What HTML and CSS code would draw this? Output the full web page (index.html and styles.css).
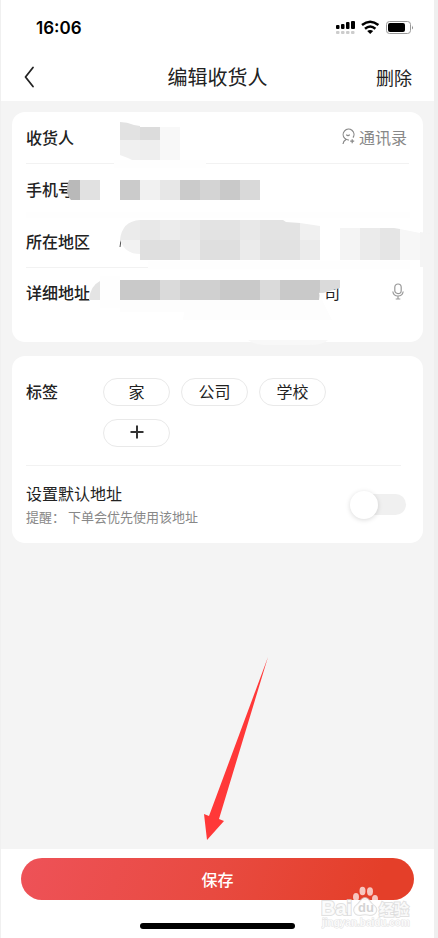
FILE: index.html
```html
<!DOCTYPE html>
<html lang="zh-CN">
<head>
<meta charset="utf-8">
<meta name="viewport" content="width=device-width, initial-scale=1">
<title>编辑收货人</title>
<link rel="stylesheet" href="styles.css">
</head>
<body>
<form class="screen">
  <div class="status">
    <span class="time">16:06</span>
    <svg class="status-icons" width="80" height="16" viewBox="0 0 80 16" aria-hidden="true">
      <g fill="#000"><rect x="2" y="5" width="3.500" height="4" rx="1"/><rect x="7" y="4" width="3.500" height="5" rx="1"/><rect x="12" y="2" width="3.500" height="7" rx="1"/><rect x="17" y="1" width="4" height="8" rx="1"/></g>
      <g fill="#ccc"><rect x="2" y="11" width="3.500" height="3" rx="1"/><rect x="7" y="11" width="3.500" height="3" rx="1"/><rect x="12" y="11" width="3.500" height="3" rx="1"/><rect x="17" y="11" width="3.500" height="3" rx="1"/></g>
      <g fill="none" stroke="#000" stroke-width="2.500"><path d="M28 5q8.200-6.600 16.400 0"/><path d="M31 8.700q5.200-4.400 10.400 0"/></g>
      <path d="M33.200 10.900q3-2 6 0L36.200 14z"/>
      <rect x="52.500" y="1.500" width="24" height="12" rx="3" fill="none" stroke="#999"/>
      <rect x="54" y="3" width="17" height="9" rx="2"/>
      <path d="M78 5.500q1.800 2 0 4z" fill="#888"/>
    </svg>
  </div>
  <header class="nav">
    <button type="button" class="back" aria-label="返回"><svg width="12" height="24" viewBox="0 0 12 24"><path d="M10 2.500 2.500 12l7.500 9.500" fill="none" stroke="#222" stroke-width="1.800" stroke-linecap="round" stroke-linejoin="round"/></svg></button>
    <h1>编辑收货人</h1>
    <button type="button" class="delete">删除</button>
  </header>
  <main>
    <section class="card contact">
      <div class="row">
        <label for="name">收货人</label>
        <input id="name" type="text">
        <button type="button" class="book">
          <svg width="14" height="17" viewBox="0 0 14 17" fill="none" stroke="#888" stroke-width="1.200"><path d="M3.600 10.200A5.400 5.400 0 1 1 12 9.600M3.600 10.200Q5.500 12.200 8 12M4.800 11.600Q2.400 12.800 2 16M5.300 6.700q1.700 2 3.400 0M11.200 11.200v4M9.200 13.200h4"/></svg>
          通讯录
        </button>
      </div>
      <div class="row">
        <label for="phone">手机号</label>
        <input id="phone" type="tel">
      </div>
      <div class="row">
        <label for="region">所在地区</label>
        <input id="region" type="text">
      </div>
      <div class="row address">
        <label for="address">详细地址</label>
        <input id="address" type="text" value="司">
        <button type="button" class="mic" aria-label="语音输入"><svg width="12" height="18" viewBox="0 0 12 18" fill="none" stroke="#999" stroke-width="1.200"><rect x="2.800" y="1" width="6.400" height="9.600" rx="3.200"/><path d="M.8 8.500Q1.500 13 6 13t5.200-4.500M6 13v3M3.700 16h4.600"/></svg></button>
      </div>
      <svg class="redaction" viewBox="12 112 411 230" aria-hidden="true">
        <path fill="#fefefe" d="M114 160h92v8h-92zM26 212h384v6H26zM148 261h262v8H148zM100 276h20v32h-20z"/>
        <path fill="#e2e2e2" d="M120 122q7 0 14 3l6 1v14h-20z"/><path fill="#dcdcdc" d="M140 127h20v13h-20z"/><path fill="#f8f8f8" d="M160 127h20v33h-20z"/>
        <path fill="#f0f0f0" d="M120 140h20v20h-8l-4-2-8-3z"/><path fill="#eee" d="M140 140h20v20h-20z"/>
        <path fill="#b9b9b9" d="M69 180h11v20H71q-4-4-4-10 0-6 2-10z"/><path fill="#e1e1e1" d="M80 180h20v20H80z"/>
        <g><path fill="#cbcbcb" d="M120 180h20v20h-20zM180 180h20v20h-20z"/><path fill="#f1f1f1" d="M140 180h20v20h-20z"/><path fill="#e7e7e7" d="M160 180h20v20h-20z"/><path fill="#d4d4d4" d="M200 180h20v20h-20z"/><path fill="#c9c9c9" d="M220 180h20v20h-20z"/><path fill="#d9d9d9" d="M240 180h20v20h-20z"/></g>
        <path stroke="#555" stroke-width="1" d="m121 240-1 7"/>
        <path fill="#ebebeb" d="M140 220v20h-20q2-19 20-20z"/><path fill="#f2f2f2" d="M120 240h20v14q-15 0-20-14z"/>
        <path fill="#e8e8e8" d="M140 220h20v20h-20zM180 220h20v20h-20zM240 220h20v20h-20z"/><path fill="#ececec" d="M160 220h20v20h-20z"/><path fill="#e3e3e3" d="M200 220h40v20h-40zM260 220h23l3 2 14 1v17h-40z"/><path fill="#f0f0f0" d="m300 223 20 3v14h-20z"/>
        <path fill="#dfdfdf" d="M140 240h40v20h-40zM200 240h40v20h-40z"/><path fill="#ebebeb" d="M180 240h20v20h-20zM240 240h20v20h-20zM300 240h20v20h-20z"/><path fill="#e2e2e2" d="M260 240h40v20h-40z"/>
        <path fill="#f4f4f4" d="M340 228h20v32h-20zM420 232l12 2 7 7v20l-8 6h-11z"/><path fill="#ebebeb" d="M360 228h20v32h-20z"/><path fill="#e5e5e5" d="M380 228h14l6 1v31h-20z"/><path fill="#f7f7f7" d="m400 229 20 4v27h-20z"/>
        <path fill="#e4e4e4" d="M89 300q1-14 11-19v19z"/>
        <path fill="#c9c9c9" d="M120 280h40v20h-40zM220 280h40v20h-40zM280 280h40v11l-1 9h-39z"/><path fill="#dadada" d="M160 280h20v20h-20zM260 280h20v20h-20zM320 280h20v8l-20 6z"/><path fill="#d0d0d0" d="M180 280h40v20h-40z"/>
        <path fill="#fefefe" d="M319 293h5v7l-2 1z"/>
        <path fill="#fdfdfd" d="M120 300h202l10 20H183l1-8h-64z"/>
        <path fill="#f8f8f8" d="M248 340h80q-4 5-20 5h-40q-14 0-20-5z"/>
      </svg>
    </section>
    <section class="card options">
      <div class="tag-row">
        <h2>标签</h2>
        <div class="tags">
          <button type="button">家</button>
          <button type="button">公司</button>
          <button type="button">学校</button>
          <button type="button" aria-label="添加标签"><svg width="14" height="14" viewBox="0 0 14 14"><path d="M7 .5v13M.5 7h13" stroke="#333" stroke-width="2"/></svg></button>
        </div>
      </div>
      <div class="default-row">
        <label for="default"><span>设置默认地址</span><small>提醒： 下单会优先使用该地址</small></label>
        <input id="default" class="switch" type="checkbox" role="switch">
      </div>
    </section>
  </main>
  <footer>
    <button type="submit" class="save">保存</button>
    <div class="home"></div>
    <svg class="watermark" viewBox="0 0 92 46" aria-hidden="true">
      <g fill="#fff" fill-opacity=".7"><ellipse cx="35" cy="14" rx="3" ry="4"/><ellipse cx="41.500" cy="8" rx="3" ry="4.200"/><ellipse cx="49" cy="8.500" rx="3" ry="4.200"/><ellipse cx="54" cy="16" rx="3" ry="4"/></g>
      <path d="M44 15c4 0 4 4 8 7 6 4 3 10-3 10-3-1-7-1-10 0-6 0-8-6-3-10 4-3 4-7 8-7z" class="mark"/>
      <text x="0" y="32" class="mark brand">Bai</text>
      <text x="37" y="29" class="du">du</text>
      <text x="58" y="32" class="mark cn">经验</text>
      <text x="1" y="43" class="mark site">jingyan.baidu.com</text>
    </svg>
  </footer>
  <svg class="arrow" viewBox="0 0 64 183" aria-hidden="true"><path fill="#ff3838" d="M64 0 15 162l5 2L3 183 0 157l5 2z"/></svg>
</form>
</body>
</html>
```
FILE: styles.css
```css
* { box-sizing: border-box; }
body {
  margin: 0;
  background: #f4f4f4;
  border-left: 1px solid #f0f0f0;
  border-right: 4px solid #efefef;
  font-family: "Noto Sans CJK SC", sans-serif;
  font-size: 16px;
  line-height: 24px;
  color: #222;
  overflow-x: hidden;
}
button, input { font: inherit; color: inherit; border: 0; padding: 0; margin: 0; background: none; }
button { display: flex; align-items: center; justify-content: center; }
svg { display: block; flex: none; }
h1, h2 { margin: 0; }

.screen { position: relative; display: flex; flex-direction: column; min-height: 100vh; }
.status { display: flex; justify-content: space-between; align-items: center; height: 52px; padding: 4px 20px 0 35px; background: #fff; }
.time { font: 600 17px/24px Inter, sans-serif; color: #000; }
.nav { display: grid; grid-template-columns: 1fr auto 1fr; align-items: center; height: 49px; padding: 0 22px; background: #fff; }
.nav h1 { font-size: 20px; font-weight: 400; }
.back { justify-self: start; }
.delete { justify-self: end; font-size: 18px; }

main { flex: 1; display: flex; flex-direction: column; gap: 14px; padding: 11px; }
.card { position: relative; background: #fff; border-radius: 13px; padding: 0 14px; }
.row { display: flex; align-items: center; height: 52px; padding-bottom: 2px; border-bottom: 1px solid #f2f2f2; }
.row label { width: 78px; font-weight: 500; }
.row input { flex: 1; min-width: 0; outline: 0; }
.book { gap: 4px; padding-right: 2px; color: #888; }
.contact .address { height: 74px; align-items: flex-start; padding-top: 12px; border: 0; }
.address input { text-align: right; }
.mic { margin: 3px 5px 0 52px; }
.redaction { position: absolute; inset: 0; width: 411px; height: 230px; overflow: visible; pointer-events: none; }

.tag-row { display: flex; margin-right: 8px; padding: 22px 0 18px; border-bottom: 1px solid #f2f2f2; }
.tag-row h2 { width: 77px; font-size: 16px; font-weight: 500; line-height: 26px; }
.tags { flex: 1; display: flex; flex-wrap: wrap; gap: 13px 11px; padding-right: 60px; }
.tags button { width: 67px; height: 28px; padding-bottom: 2px; border: 1px solid #e9e9e9; border-radius: 14px; }
.default-row { display: flex; align-items: center; justify-content: space-between; height: 77px; padding-right: 3px; }
.default-row span, .default-row small { display: block; }
.default-row small { font-size: 13px; color: #888; }
.switch { appearance: none; display: flex; align-items: center; width: 54px; height: 21px; border-radius: 11px; background: #f0f0f0; }
.switch::before { content: ""; width: 28px; height: 28px; margin-left: -2px; border-radius: 50%; background: #fff; box-shadow: 0 1px 5px rgba(0, 0, 0, .15); flex: none; }
.switch:checked { justify-content: flex-end; background: #e6402c; }

footer { position: relative; display: flex; flex-direction: column; align-items: center; gap: 23px; height: 89px; padding: 9px 20px; background: #fff; }
.save { width: 100%; height: 42px; border-radius: 21px; color: #fff; font-weight: 500; background: linear-gradient(110deg, #ee5258, #e84a40 50%, #e43f29 90%); }
.home { width: 155px; height: 6px; border-radius: 3px; background: #000; }
.watermark { position: absolute; right: 21px; bottom: 9px; width: 92px; height: 46px; pointer-events: none; font-family: "Liberation Sans", "Noto Sans CJK SC", sans-serif; font-weight: 700; }
.mark { fill: #fff; fill-opacity: .85; stroke: #d4d4d4; stroke-width: 2px; stroke-opacity: .7; paint-order: stroke; }
.brand { font-size: 20px; }
.cn { font-size: 15px; }
.du { font-size: 13px; fill: #d4d4d4; }
.site { font-size: 10px; stroke-width: 1px; }
.arrow { position: absolute; left: 203px; bottom: 98px; width: 64px; height: 183px; pointer-events: none; }
```
